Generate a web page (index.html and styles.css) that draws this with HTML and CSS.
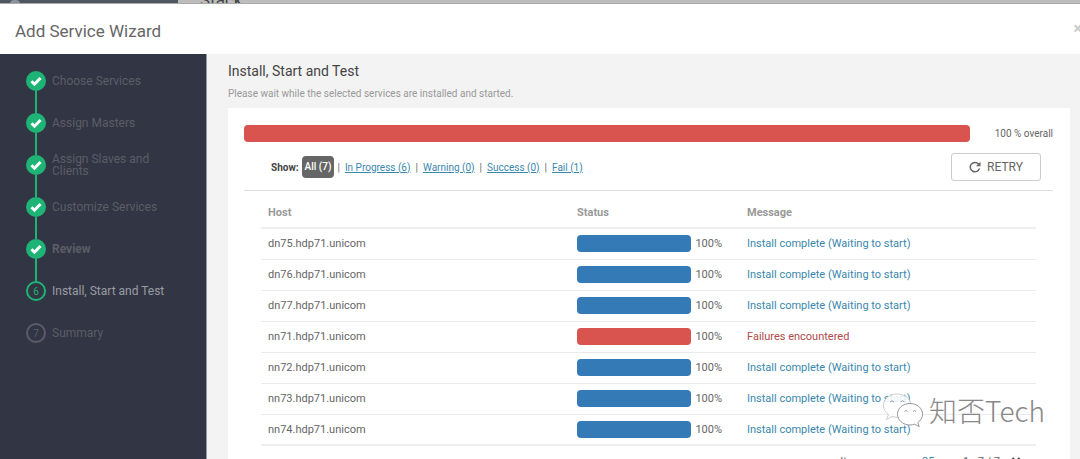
FILE: index.html
```html
<!DOCTYPE html>
<html lang="en">
<head>
<meta charset="utf-8">
<title>Add Service Wizard</title>
<link rel="stylesheet" href="styles.css">
</head>
<body>
<div class="backdrop"><div class="backdrop-nav"><span class="backdrop-logo"></span></div><div class="backdrop-page"><span class="backdrop-title">Stack</span></div></div>
<div class="modal">
  <header class="modal-header">
    <h1 class="modal-title">Add Service Wizard</h1>
    <button class="close" type="button" aria-label="Close">×</button>
  </header>
  <div class="modal-body">
    <nav class="sidebar">
      <ol class="steps">
        <li class="step done"><span class="dot"><svg class="check" viewBox="0 0 12 12"><path d="M1.5 6.2l3 3 6-6.2"/></svg></span><a class="step-name" href="#">Choose Services</a></li>
        <li class="step done"><span class="dot"><svg class="check" viewBox="0 0 12 12"><path d="M1.5 6.2l3 3 6-6.2"/></svg></span><a class="step-name" href="#">Assign Masters</a></li>
        <li class="step done"><span class="dot"><svg class="check" viewBox="0 0 12 12"><path d="M1.5 6.2l3 3 6-6.2"/></svg></span><a class="step-name" href="#">Assign Slaves and Clients</a></li>
        <li class="step done"><span class="dot"><svg class="check" viewBox="0 0 12 12"><path d="M1.5 6.2l3 3 6-6.2"/></svg></span><a class="step-name" href="#">Customize Services</a></li>
        <li class="step done previous"><span class="dot"><svg class="check" viewBox="0 0 12 12"><path d="M1.5 6.2l3 3 6-6.2"/></svg></span><a class="step-name" href="#">Review</a></li>
        <li class="step current"><span class="dot">6</span><a class="step-name" href="#">Install, Start and Test</a></li>
        <li class="step"><span class="dot">7</span><a class="step-name" href="#">Summary</a></li>
      </ol>
    </nav>
    <main class="content">
      <h2 class="page-title">Install, Start and Test</h2>
      <p class="page-note">Please wait while the selected services are installed and started.</p>
      <section class="panel">
        <div class="overall"><div class="bar fail"></div><span class="overall-text">100 % overall</span></div>
        <div class="toolbar">
          <div class="filters">
            <div class="filter-current">
              <strong class="filter-label">Show:</strong>
              <a class="filter active" href="#">All (7)</a><span>|</span>
            </div>
            <a class="filter" href="#">In Progress (6)</a><span>|</span>
            <a class="filter" href="#">Warning (0)</a><span>|</span>
            <a class="filter" href="#">Success (0)</a><span>|</span>
            <a class="filter" href="#">Fail (1)</a>
          </div>
          <button class="retry" type="button"><svg class="retry-icon" viewBox="0 0 12 12"><path class="arc" d="M9.6 3.1A4.7 4.7 0 1 0 10.5 7.4"/><path class="tip" d="M11.5.7v4.5H7z"/></svg>RETRY</button>
        </div>
        <table class="hosts">
          <thead><tr><th class="col-host">Host</th><th class="col-status">Status</th><th>Message</th></tr></thead>
          <tbody>
            <tr><td>dn75.hdp71.unicom</td><td><div class="progress"><div class="bar"></div>100%</div></td><td><a class="message" href="#">Install complete (Waiting to start)</a></td></tr>
            <tr><td>dn76.hdp71.unicom</td><td><div class="progress"><div class="bar"></div>100%</div></td><td><a class="message" href="#">Install complete (Waiting to start)</a></td></tr>
            <tr><td>dn77.hdp71.unicom</td><td><div class="progress"><div class="bar"></div>100%</div></td><td><a class="message" href="#">Install complete (Waiting to start)</a></td></tr>
            <tr><td>nn71.hdp71.unicom</td><td><div class="progress"><div class="bar fail"></div>100%</div></td><td><a class="message failed" href="#">Failures encountered</a></td></tr>
            <tr><td>nn72.hdp71.unicom</td><td><div class="progress"><div class="bar"></div>100%</div></td><td><a class="message" href="#">Install complete (Waiting to start)</a></td></tr>
            <tr><td>nn73.hdp71.unicom</td><td><div class="progress"><div class="bar"></div>100%</div></td><td><a class="message" href="#">Install complete (Waiting to start)</a></td></tr>
            <tr><td>nn74.hdp71.unicom</td><td><div class="progress"><div class="bar"></div>100%</div></td><td><a class="message" href="#">Install complete (Waiting to start)</a></td></tr>
          </tbody>
        </table>
        <div class="pager">
          <label class="page-size">Items per page: <select class="page-select"><option>25</option></select></label>
          <span>1 - 7 / 7</span>
          <span class="arrows"><svg class="arrow" viewBox="0 0 6 10"><path d="M5 1L1 5l4 4"/></svg><svg class="arrow" viewBox="0 0 6 10"><path d="M1 1l4 4-4 4"/></svg></span>
        </div>
      </section>
    </main>
  </div>
</div>
<div class="watermark">
  <svg class="wechat" viewBox="0 0 42 36">
    <path class="bubble" d="M15 2C7.500 2 1.500 7 1.500 13.500c0 4 2 7 5 9l-2 5 5.500-3c2 .6 4 .8 6 .8C23 25 29 20 29 13.500 29 7 23 2 15 2z"/>
    <path class="bubble front" d="M28 11.500c-7 0-12.500 4.700-12.500 10.700S21 33 28 33c1.700 0 3.200-.3 4.700-.8l4.500 2.500-1.300-4.200c3-2 4.600-4.800 4.600-8.300C40.500 16.200 35 11.500 28 11.500z"/>
    <path class="eye" d="M8 10q2-2.500 4 0M18.500 10q2-2.500 4 0M22.500 19.500q1.500-2 3 0M31 19.500q1.500-2 3 0"/>
  </svg>
  <span class="watermark-text">知否Tech</span>
</div>
</body>
</html>
```

FILE: styles.css
```css
* { box-sizing: border-box; }
body {
  margin: 0;
  height: 100vh;
  overflow: hidden;
  display: flex;
  flex-direction: column;
  position: relative;
  background: #f3f3f3;
  color: #666;
  font-family: Roboto, "Liberation Sans", sans-serif;
  font-size: 11px;
}
.backdrop { display: flex; flex: none; height: 4px; border-bottom: 1px solid #a9a9a9; overflow: hidden; }
.backdrop-nav { width: 178px; background: #4d5661; }
.backdrop-logo { display: block; width: 10px; height: 4px; margin-left: 10px; border-radius: 5px 5px 0 0; background: #8b929b; }
.backdrop-page { flex: 1; display: flex; align-items: flex-end; padding-left: 22px; background: #bdbdbd; }
.backdrop-title { margin-bottom: -6px; font-size: 17px; line-height: 17px; color: #444; }
.modal { flex: 1; display: flex; flex-direction: column; min-height: 0; }
.modal-header {
  flex: none;
  display: flex;
  align-items: center;
  justify-content: space-between;
  height: 50px;
  padding-left: 15px;
  padding-top: 3px;
  background: #fff;
}
.modal-title { margin: 0; font-size: 17px; font-weight: 400; color: #666; }
.close { margin: 0 -2px 0 0; padding: 0 0 4px; border: 0; background: none; font: bold 16px Roboto, sans-serif; line-height: 16px; color: #ccc; }
.modal-body { flex: 1; display: flex; min-height: 0; }
.sidebar { flex: none; width: 207px; padding: 6px 40px 0 26px; background: #323544; border-right: 1px solid #999ba3; }
.steps { margin: 0; padding: 0; list-style: none; }
.step { position: relative; display: flex; align-items: center; gap: 6px; height: 42px; color: #5c5d66; }
.step.done::after { content: ""; position: absolute; left: 9px; top: 31px; width: 2px; height: 22px; background: #1eb475; }
.dot {
  flex: none;
  display: flex;
  align-items: center;
  justify-content: center;
  width: 20px;
  height: 20px;
  border: 2px solid currentColor;
  border-radius: 50%;
  font-size: 10px;
}
.done .dot { background: #1eb475; border-color: #1eb475; }
.current .dot { color: #1eb475; }
.check { width: 12px; height: 12px; fill: none; stroke: #fff; stroke-width: 3; }
.step-name { font-size: 12px; line-height: 12px; color: inherit; text-decoration: none; }
.previous .step-name { font-weight: 700; }
.current .step-name { color: #9b9ca3; }
.content { flex: 1; display: flex; flex-direction: column; min-width: 0; padding: 9px 10px 0 21px; background: #f3f3f3; }
.page-title { margin: 0; font-size: 14px; line-height: 16px; font-weight: 400; color: #444; }
.page-note { margin: 8px 0; font-size: 10px; line-height: 13px; color: #999; }
.panel { flex: 1; padding: 17px 17px 0 16px; background: #fff; }
.bar { flex: 1; height: 17px; border-radius: 4px; background: #337ab7; }
.bar.fail { background: #d9534f; }
.overall { display: flex; align-items: center; gap: 25px; font-size: 10px; }
.toolbar {
  display: flex;
  align-items: center;
  justify-content: space-between;
  height: 49px;
  padding: 2px 12px 0 27px;
  border-bottom: 1px solid #ddd;
}
.filters, .filter-current { display: flex; align-items: center; gap: 5px; font-size: 10px; }
.filter-current { gap: 3px; }
.filter-label { color: #444; }
.filter { color: #3a87ad; text-decoration: underline; }
.filter.active { padding: 4px 3px; border-radius: 4px; background: #666; color: #fff; line-height: 14px; text-decoration: none; font-weight: 500; }
.retry {
  display: flex;
  align-items: center;
  justify-content: center;
  gap: 6px;
  width: 90px;
  height: 28px;
  border: 1px solid #ccc;
  border-radius: 3px;
  background: #fff;
  color: #666;
  font: 12px Roboto, sans-serif;
}
.retry-icon { width: 12px; height: 12px; }
.arc { fill: none; stroke: #666; stroke-width: 1.500; }
.tip { fill: #666; }
.hosts { width: calc(100% - 34px); margin: 7px 0 0 17px; table-layout: fixed; border-collapse: collapse; }
.hosts th { height: 30px; padding: 0 7px; border-bottom: 2px solid #eee; text-align: left; font-weight: 700; color: #999; }
.hosts td { height: 31px; padding: 0 7px; border-bottom: 1px solid #eaeaea; }
.hosts tbody tr:last-child td { border-bottom: 2px solid #eee; }
.col-host { width: 309px; }
.col-status { width: 170px; }
.progress { display: flex; align-items: center; gap: 4px; padding-right: 11px; }
.message { color: #3a87ad; text-decoration: none; }
.message.failed { color: #b04a4a; }
.pager { display: flex; justify-content: flex-end; align-items: center; gap: 9px; padding: 8px 30px 0 0; line-height: 16px; }
.page-size { display: flex; gap: 6px; padding-right: 19px; }
.page-select { appearance: none; padding: 0; border: 0; background: none; font: inherit; color: #3a87ad; }
.arrows { display: flex; gap: 2px; }
.arrow { width: 6px; height: 10px; fill: none; stroke: #444; stroke-width: 2; }
.watermark { position: absolute; right: 35px; bottom: 31px; display: flex; align-items: center; gap: 5px; }
.wechat { width: 42px; height: 36px; }
.bubble { fill: #fff; fill-opacity: .85; stroke: #ccc; stroke-width: 1; }
.bubble.front { stroke: #999; }
.eye { fill: none; stroke: #999; stroke-width: 1; }
.watermark-text { font: 300 28px "Noto Sans CJK SC", sans-serif; color: #888; line-height: 36px; text-shadow: 1px 0 #fff; }
```
